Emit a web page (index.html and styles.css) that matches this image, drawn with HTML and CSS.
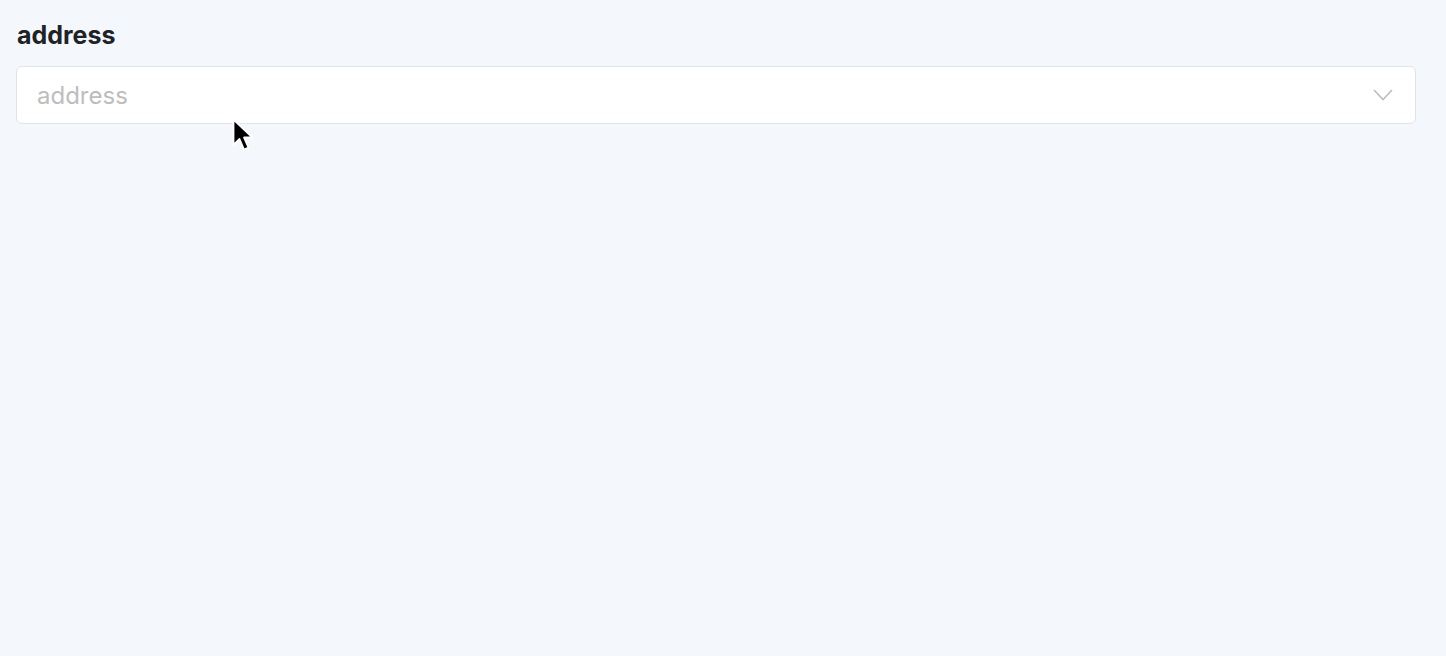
FILE: index.html
```html
<!DOCTYPE html>
<html>
<head>
<meta charset="utf-8">
<link rel="stylesheet" href="styles.css">
</head>
<body>
<div class="field">
  <label class="field-label">address</label>
  <div class="select">
    <span class="placeholder">address</span>
    <svg class="chevron" width="20" height="12" viewBox="0 0 20 12"><path d="M1 1 L10 10.5 L19 1" fill="none" stroke="#bdbdbd" stroke-width="1.6"/></svg>
  </div>
</div>
<svg class="cursor" width="24" height="36" viewBox="0 0 24 36"><path d="M1.5 1.5 L1.5 27 L7.5 21 L12 31.5 L16.5 29.6 L12 19.5 L20.5 19.5 Z" fill="#000" stroke="#fff" stroke-width="1.8" stroke-linejoin="round"/></svg>
</body>
</html>
```
FILE: styles.css
```css
html, body {
  margin: 0;
  padding: 0;
  background: #f4f7fc;
  height: 100%;
}
body {
  font-family: Inter, "Liberation Sans", sans-serif;
  position: relative;
}
.field {
  padding: 17px 30px 0 16px;
  display: flex;
  flex-direction: column;
  gap: 13px;
}
.field-label {
  font-size: 25px;
  font-weight: 700;
  color: #1f2226;
  line-height: 36px;
  padding-left: 1px;
}
.select {
  height: 56px;
  background: #fff;
  border: 1px solid #dfe3ea;
  border-radius: 6px;
  display: flex;
  align-items: center;
  justify-content: space-between;
  padding: 0 22px 0 20px;
}
.placeholder {
  font-size: 24px;
  color: #bdbdbd;
}
.chevron {
  display: block;
}
.cursor {
  position: absolute;
  left: 232px;
  top: 118px;
}
```
